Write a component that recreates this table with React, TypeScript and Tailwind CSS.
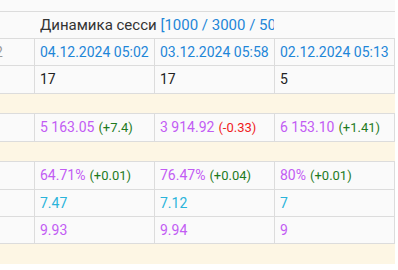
import React from 'react';

type Cell = { main: string; delta?: string; deltaColor?: string; color: string };

const cols = 'w-[120px] shrink-0 border-r border-[#dcdcdc] pl-[5px] flex items-center whitespace-nowrap overflow-hidden';

function DataRow({ h, cells, lead }: { h: string; cells: Cell[]; lead?: React.ReactNode }) {
    return (
        <div className={`flex w-[395px] border-b border-[#dcdcdc] bg-[#fafafa] ${h}`}>
            <div className="w-[35px] shrink-0 border-r border-[#dcdcdc] flex items-center overflow-hidden">{lead}</div>
            {cells.map((c, i) => (
                <div key={i} className={cols}>
                    <span className={c.color}>{c.main}</span>
                    {c.delta && <span className={`ml-[4px] text-[13px] ${c.deltaColor}`}>{c.delta}</span>}
                </div>
            ))}
        </div>
    );
}

function Spacer({ last }: { last?: boolean }) {
    return <div className={`w-[395px] h-[20px] bg-[#fdf6e4] ${last ? '' : 'border-b border-[#dcdcdc]'}`} />;
}

export default function App() {
    const purple = 'text-[#c25cf4]';
    const green = 'text-[#1f7a1f]';
    return (
        <div className="bg-white w-[398px] h-[270px] overflow-hidden text-[14px] text-[#222]" style={{ fontFamily: 'Roboto, sans-serif' }}>
            <div className="w-[395px] h-[12px] bg-[#fafafa] border-b border-[#dcdcdc]" />
            <div className="w-[395px] h-[27px] bg-[#fafafa] border-b border-[#dcdcdc] flex items-center">
                <div className="ml-[40px] w-[234px] overflow-hidden whitespace-nowrap text-[15px]">
                    <span className="text-[#333]">Динамика сесси </span>
                    <span className="text-[#1e86d8]">[1000 / 3000 / 5000]</span>
                </div>
            </div>
            <DataRow
                h="h-[27px]"
                lead={<span className="-ml-[5px] text-[#9a9a9a]">2</span>}
                cells={[
                    { main: '04.12.2024 05:02', color: 'text-[#1e86d8]' },
                    { main: '03.12.2024 05:58', color: 'text-[#1e86d8]' },
                    { main: '02.12.2024 05:13', color: 'text-[#1e86d8]' },
                ]}
            />
            <DataRow
                h="h-[28px]"
                cells={[
                    { main: '17', color: 'text-[#222]' },
                    { main: '17', color: 'text-[#222]' },
                    { main: '5', color: 'text-[#222]' },
                ]}
            />
            <Spacer />
            <DataRow
                h="h-[28px]"
                cells={[
                    { main: '5 163.05', delta: '(+7.4)', deltaColor: green, color: purple },
                    { main: '3 914.92', delta: '(-0.33)', deltaColor: 'text-[#f01c1c]', color: purple },
                    { main: '6 153.10', delta: '(+1.41)', deltaColor: green, color: purple },
                ]}
            />
            <Spacer />
            <DataRow
                h="h-[28px]"
                cells={[
                    { main: '64.71%', delta: '(+0.01)', deltaColor: green, color: purple },
                    { main: '76.47%', delta: '(+0.04)', deltaColor: green, color: purple },
                    { main: '80%', delta: '(+0.01)', deltaColor: green, color: purple },
                ]}
            />
            <DataRow
                h="h-[27px]"
                cells={[
                    { main: '7.47', color: 'text-[#2ab4da]' },
                    { main: '7.12', color: 'text-[#2ab4da]' },
                    { main: '7', color: 'text-[#2ab4da]' },
                ]}
            />
            <DataRow
                h="h-[27px]"
                cells={[
                    { main: '9.93', color: purple },
                    { main: '9.94', color: purple },
                    { main: '9', color: purple },
                ]}
            />
            <Spacer last />
        </div>
    );
}
